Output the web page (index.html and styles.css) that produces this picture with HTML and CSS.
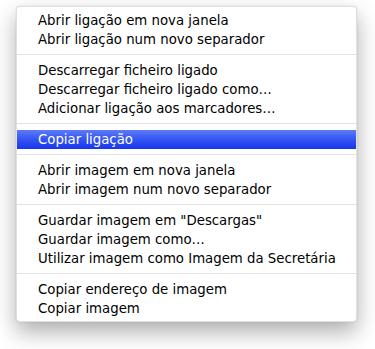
FILE: index.html
```html
<!DOCTYPE html>
<html lang="pt-PT">
<head>
    <meta charset="UTF-8">
    <meta name="viewport" content="width=device-width, initial-scale=1.0">
    <title>Menu de contexto</title>
    <link rel="stylesheet" href="styles.css">
</head>
<body>
    <div class="menu">
        <div class="menu-item">Abrir ligação em nova janela</div>
        <div class="menu-item">Abrir ligação num novo separador</div>
        <div class="separator"></div>
        <div class="menu-item">Descarregar ficheiro ligado</div>
        <div class="menu-item">Descarregar ficheiro ligado como…</div>
        <div class="menu-item">Adicionar ligação aos marcadores…</div>
        <div class="separator"></div>
        <div class="menu-item active">Copiar ligação</div>
        <div class="separator"></div>
        <div class="menu-item">Abrir imagem em nova janela</div>
        <div class="menu-item">Abrir imagem num novo separador</div>
        <div class="separator"></div>
        <div class="menu-item">Guardar imagem em "Descargas"</div>
        <div class="menu-item">Guardar imagem como…</div>
        <div class="menu-item">Utilizar imagem como Imagem da Secretária</div>
        <div class="separator"></div>
        <div class="menu-item">Copiar endereço de imagem</div>
        <div class="menu-item">Copiar imagem</div>
    </div>
</body>
</html>
```

FILE: styles.css
```css
* {
    margin: 0;
    padding: 0;
    box-sizing: border-box;
}

html, body {
    min-height: 100%;
}

body {
    font-family: 'DejaVu Sans', Verdana, sans-serif;
    background: #fff;
    color: #000;
    min-height: 100vh;
    padding: 6px 0 30px 16px;
}

.menu {
    width: 341px;
    padding: 4px 0 3px;
    background: #fff;
    border: 1px solid rgba(0,0,0,0.12);
    border-radius: 4px;
    box-shadow: 0 10px 22px rgba(0,0,0,0.32), 0 0 2px rgba(0,0,0,0.12);
}

.menu-item {
    height: 19px;
    line-height: 19px;
    padding-left: 21px;
    font-size: 13.3px;
    white-space: nowrap;
}

.menu-item.active {
    background: linear-gradient(to bottom, #5d7af8 0%, #3454f3 50%, #1637ec 100%);
    color: #fff;
}

.separator {
    height: 12px;
    padding-top: 5px;
}

.separator::after {
    content: "";
    display: block;
    height: 1px;
    background: #e3e3e3;
}
```
